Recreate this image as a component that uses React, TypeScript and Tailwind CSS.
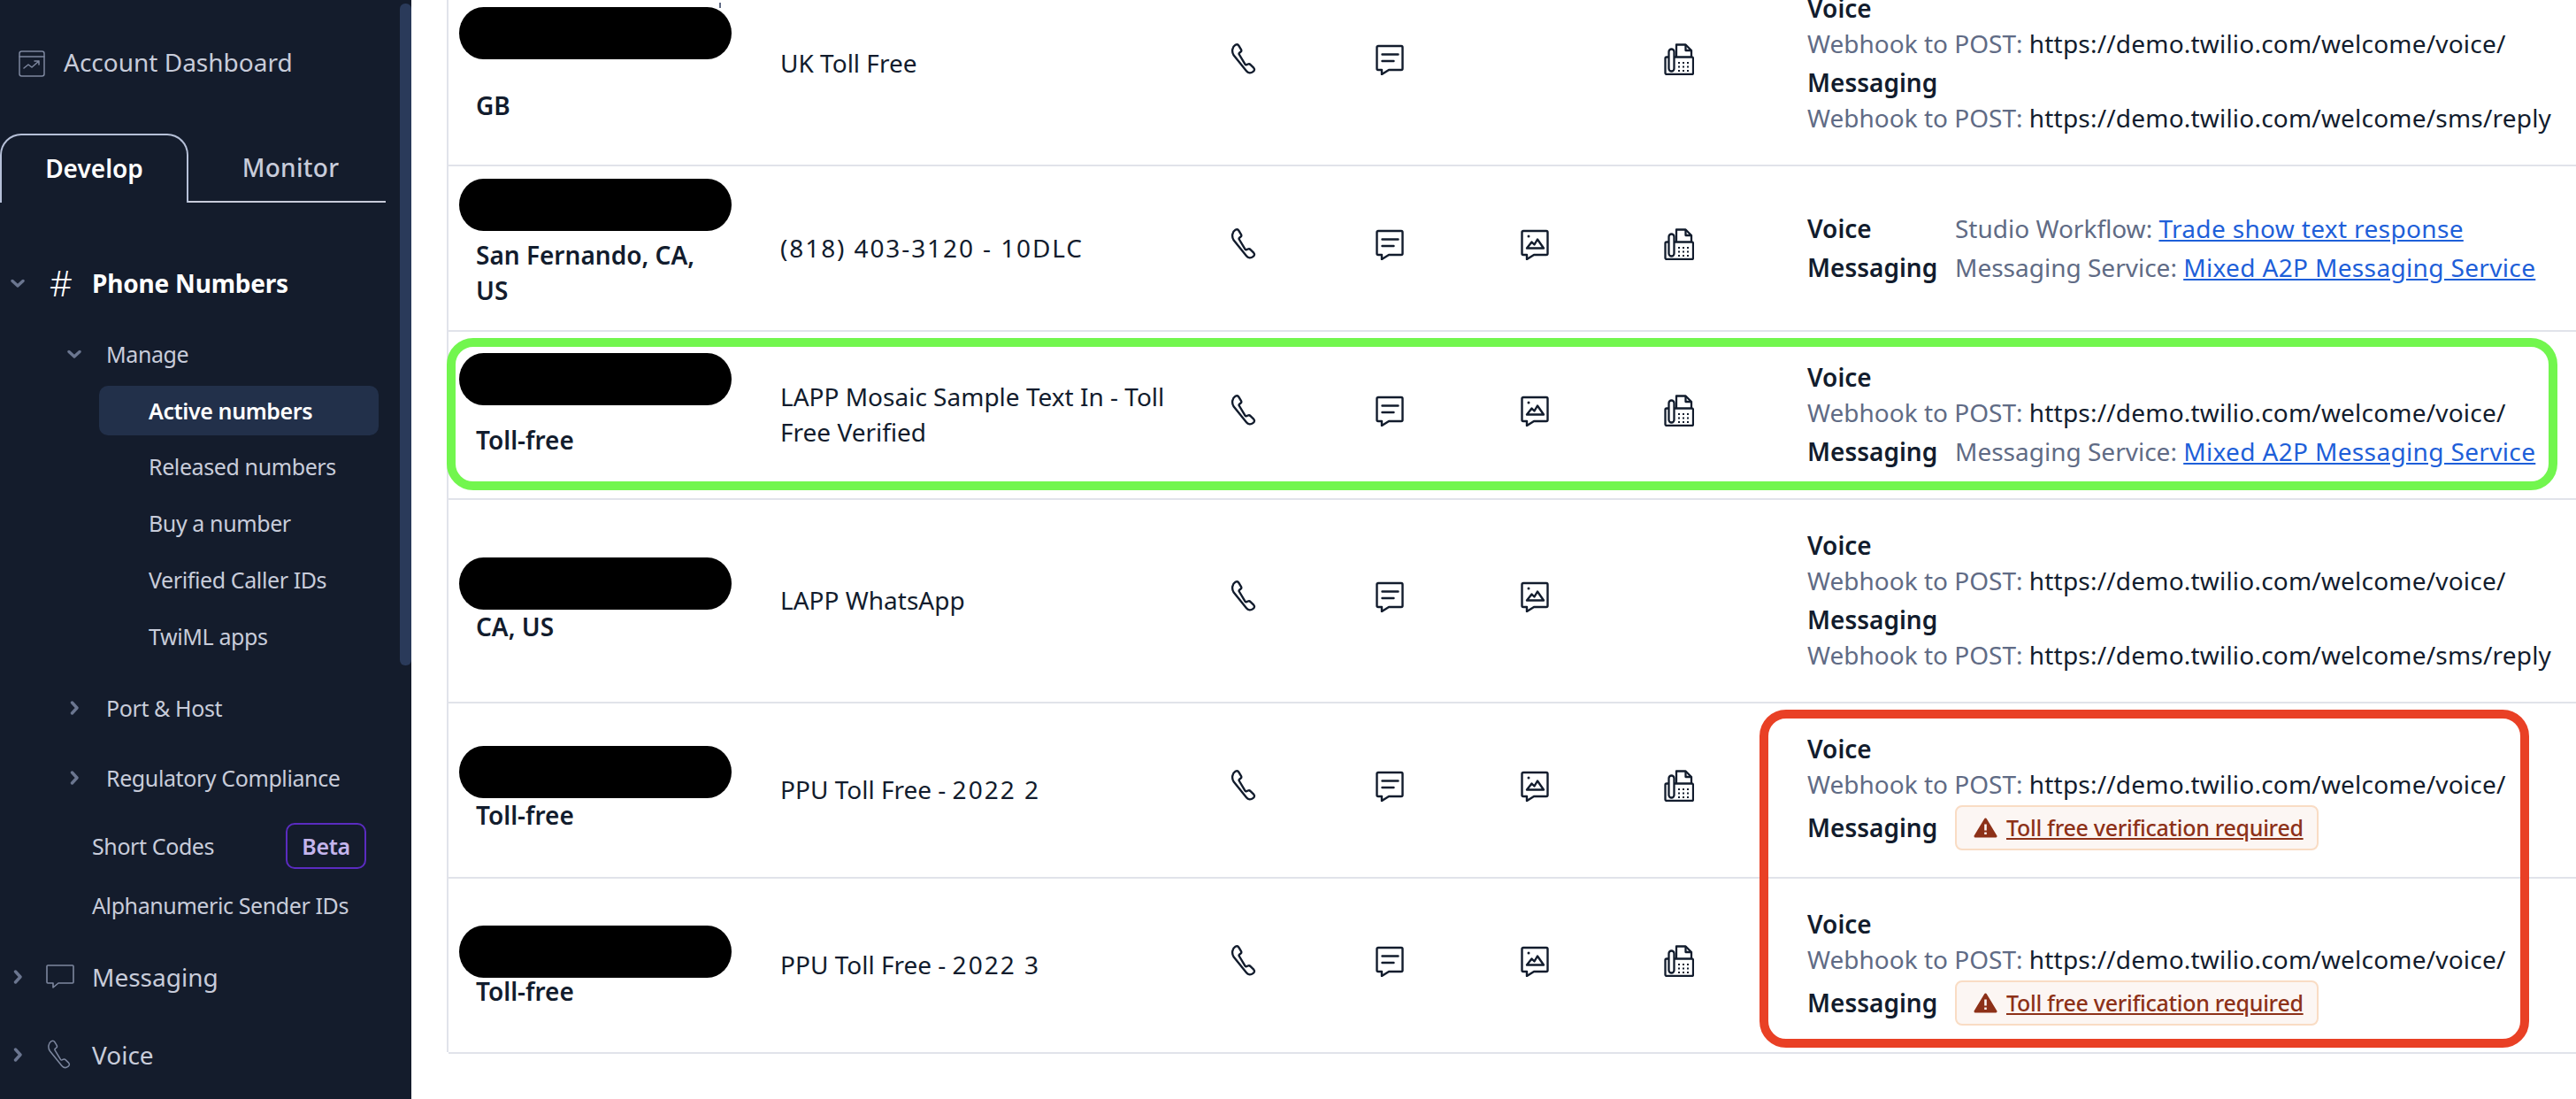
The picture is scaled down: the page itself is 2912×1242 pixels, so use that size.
import React from "react";

const font = "font-['Noto_Sans','Open_Sans',sans-serif]";

function Chevron({ dir, className }: { dir: "down" | "right"; className: string }) {
  return (
    <svg viewBox="0 0 16 16" className={className} fill="none" stroke="#6b7690" strokeWidth="3.4" strokeLinecap="round" strokeLinejoin="round">
      {dir === "down" ? <path d="M2 5.500l6 5.500 6-5.500" /> : <path d="M5.500 2l5.500 6-5.500 6" />}
    </svg>
  );
}

function PhoneIcon({ className, color = "#121c2d", sw = 2.4 }: { className: string; color?: string; sw?: number }) {
  return (
    <svg viewBox="0 0 32 36" className={className} fill="none" stroke={color} strokeWidth={sw} strokeLinejoin="round">
      <path d="M5.500 1.800c1.600-.9 3.200-.4 4 1l2.400 4c.6 1.100.4 2.300-.6 3l-1.200.9c-.6.5-.7 1.100-.3 1.800l6.700 11.200c.4.600 1 .8 1.700.5l1.500-.7c1.100-.5 2.200-.2 2.900.7l3.600 3.500c1.200 1.300 1 3.100-.5 4.200-2.700 2-5.800 1.800-7.700-.7L3.700 13.500C1 9.500 1.800 4 5.500 1.800z" />
    </svg>
  );
}

function SmsIcon() {
  return (
    <svg viewBox="0 0 32 36" className="h-[36px] w-[32px]" fill="none" stroke="#121c2d" strokeWidth="2.4" strokeLinejoin="round">
      <path d="M3 3h26a1.500 1.500 0 0 1 1.500 1.500v24a1.500 1.500 0 0 1-1.500 1.500H15l-8 5v-5H3a1.500 1.500 0 0 1-1.500-1.500v-24A1.500 1.500 0 0 1 3 3z" />
      <path d="M7.500 12.500h18M7.500 20h13" strokeLinecap="round" />
    </svg>
  );
}

function MmsIcon() {
  return (
    <svg viewBox="0 0 32 36" className="h-[36px] w-[32px]" fill="none" stroke="#121c2d" strokeWidth="2.4" strokeLinejoin="round">
      <path d="M3 3h26a1.500 1.500 0 0 1 1.500 1.500v24a1.500 1.500 0 0 1-1.500 1.500H15l-8 5v-5H3a1.500 1.500 0 0 1-1.500-1.500v-24A1.500 1.500 0 0 1 3 3z" />
      <path d="M7 22.500l5.500-7 3 3 3.500-6 7 10z" />
      <circle cx="9" cy="9" r="1.500" fill="#121c2d" stroke="none" />
    </svg>
  );
}

function FaxIcon() {
  return (
    <svg viewBox="0 0 34 36" className="h-[36px] w-[34px]" fill="none" stroke="#121c2d" strokeWidth="2.3" strokeLinejoin="round">
      <path d="M14 15V1.500h10.500L31 8v7" />
      <path d="M24.500 1.500V8H31" />
      <path d="M12 15.500h19.500a1.500 1.500 0 0 1 1.500 1.500v16.500a1.500 1.500 0 0 1-1.500 1.500H3a1.500 1.500 0 0 1-1.500-1.500V17A1.500 1.500 0 0 1 3 15.500h2" />
      <rect x="5.500" y="6.500" width="6" height="25" rx="3" />
      <path d="M16 22h2M21 22h2M26 22h2M16 26.500h2M21 26.500h2M26 26.500h2M16 31h2M21 31h2M26 31h2" strokeWidth="2" />
    </svg>
  );
}

function Pill({ className }: { className: string }) {
  return <div className={`-ml-[19px] h-[59px] w-[308px] rounded-[28px/30px] bg-black ${className}`} />;
}

function Webhook({ url }: { url: string }) {
  return (
    <div className="h-[40px] whitespace-nowrap">
      <span className="text-[#606b85]">Webhook to POST: </span>
      <span className="tracking-[0.2px] text-[#121c2d]">{url}</span>
    </div>
  );
}

function Label({ children }: { children: React.ReactNode }) {
  return <span className="font-semibold text-[#121c2d]">{children}</span>;
}

function ServiceLine({ label, prefix, link }: { label: string; prefix: string; link: string }) {
  return (
    <div className="flex h-[40px] whitespace-nowrap">
      <div className="w-[167px] shrink-0"><Label>{label}</Label></div>
      <span className="text-[#606b85]">{prefix}&nbsp;</span>
      <a className="tracking-[0.35px] text-[#1e5fd9] underline">{link}</a>
    </div>
  );
}

function Warning() {
  return (
    <div className="flex items-center">
      <div className="w-[167px] shrink-0"><Label>Messaging</Label></div>
      <div className="flex h-[51px] w-[411px] items-center rounded-[8px] border-2 border-[#f9dcc4] bg-[#fcf6f3] pl-[19px]">
        <svg viewBox="0 0 27 23" className="mr-[10px] h-[23px] w-[27px]">
          <path d="M13.500 2L25 21H2z" fill="#8d3118" stroke="#8d3118" strokeWidth="3" strokeLinejoin="round" />
          <path d="M13.500 7.500v7M13.500 16.500v2.500" stroke="#fcf6f3" strokeWidth="2.600" />
        </svg>
        <a className="text-[25px] font-medium leading-[40px] tracking-[-0.3px] text-[#8d3118] underline">Toll free verification required</a>
      </div>
    </div>
  );
}

function Row({
  rowClass,
  cellClass,
  pillClass,
  configClass = "-mt-[2px]",
  location,
  name,
  mms = true,
  fax = true,
  children,
}: {
  rowClass: string;
  cellClass: string;
  pillClass: string;
  configClass?: string;
  location: React.ReactNode;
  name: React.ReactNode;
  mms?: boolean;
  fax?: boolean;
  children: React.ReactNode;
}) {
  return (
    <div className={`flex items-center border-b-2 border-[#e1e3ea] ${rowClass}`}>
      <div className={`w-[375px] shrink-0 self-start pl-[31px] ${cellClass}`}>
        <Pill className={pillClass} />
        <div className="-mt-px font-semibold text-[#121c2d]">{location}</div>
      </div>
      <div className="-mt-[2px] w-[509px] shrink-0 pr-[60px] text-[#121c2d]">{name}</div>
      <div className="w-[164px] shrink-0 pb-[10px]"><PhoneIcon className="h-[36px] w-[32px]" /></div>
      <div className="w-[164px] shrink-0 pb-[10px]"><SmsIcon /></div>
      <div className="h-[46px] w-[162px] shrink-0 pb-[10px]">{mms && <MmsIcon />}</div>
      <div className="h-[46px] w-[162px] shrink-0 pb-[10px]">{fax && <FaxIcon />}</div>
      <div className={`flex flex-col gap-[4px] ${configClass}`}>{children}</div>
    </div>
  );
}

const V = "https://demo.twilio.com/welcome/voice/";
const S = "https://demo.twilio.com/welcome/sms/reply";

function Group({ label, children }: { label: string; children: React.ReactNode }) {
  return (
    <div>
      <div className="h-[40px]"><Label>{label}</Label></div>
      {children}
    </div>
  );
}

function SubItem({ children, active }: { children: React.ReactNode; active?: boolean }) {
  return (
    <div
      className={
        active
          ? "mb-[3px] ml-[112px] flex h-[56px] w-[316px] items-center rounded-[10px] bg-[#22304a] pl-[56px] font-semibold text-white"
          : "ml-[112px] flex h-[64px] w-[316px] items-center pl-[56px]"
      }
    >
      {children}
    </div>
  );
}

export default function App() {
  return (
    <div className={`relative flex h-[1242px] w-[2912px] overflow-hidden bg-white text-[28px] leading-[40px] ${font}`}>
      <aside className="relative h-full w-[465px] shrink-0 bg-[#141c2c] text-[25px] tracking-[-0.4px] text-[#c8ccda]">
        <div className="absolute right-0 top-[4px] h-[748px] w-[13px] rounded-[6px] bg-[#2a3a5a]" />
        <div className="flex h-[151px] items-start pl-[21px] pt-[57px] tracking-normal">
          <svg viewBox="0 0 30 30" className="h-[30px] w-[30px]" fill="none" stroke="#7d879f" strokeWidth="1.500" strokeLinecap="round" strokeLinejoin="round">
            <rect x="1" y="1" width="28" height="28" rx="2.500" />
            <path d="M1 7h28" />
            <path d="M6 20l5-4 4 3 8-7M18 12h5v4" />
          </svg>
          <span className="ml-[21px] -mt-[7px] text-[28px]">Account Dashboard</span>
        </div>
        <div className="flex w-[436px] text-[28px] tracking-normal">
          <div className="flex h-[78px] w-[213px] items-center justify-center rounded-t-[24px] border-x-2 border-t-2 border-[#b6c0d8] bg-[#141c2c] pb-[2px] font-semibold text-white">Develop</div>
          <div className="flex h-[78px] flex-1 items-center justify-center border-b-2 border-[#c8ccda] pl-[8px] font-medium tracking-[0.3px]">Monitor</div>
        </div>
        <div className="mt-[71px] flex h-[40px] items-center pl-[12px] font-bold text-white">
          <Chevron dir="down" className="h-[16px] w-[16px]" />
          <span className="ml-[28px] w-[48px] text-[40px] font-light tracking-normal">#</span>
          <span className="text-[28px] tracking-[-0.2px]">Phone Numbers</span>
        </div>
        <div className="mt-[40px] flex h-[40px] items-center pl-[76px]">
          <Chevron dir="down" className="h-[16px] w-[16px]" />
          <span className="ml-[28px]">Manage</span>
        </div>
        <div className="mt-[16px]">
          <SubItem active>Active numbers</SubItem>
          <SubItem>Released numbers</SubItem>
          <SubItem>Buy a number</SubItem>
          <SubItem>Verified Caller IDs</SubItem>
          <SubItem>TwiML apps</SubItem>
        </div>
        <div className="mt-[29px] flex h-[40px] items-center pl-[76px]">
          <Chevron dir="right" className="h-[16px] w-[16px]" />
          <span className="ml-[28px]">Port &amp; Host</span>
        </div>
        <div className="mt-[39px] flex h-[40px] items-center pl-[76px]">
          <Chevron dir="right" className="h-[16px] w-[16px]" />
          <span className="ml-[28px]">Regulatory Compliance</span>
        </div>
        <div className="mt-[31px] flex h-[52px] items-center pl-[104px]">
          <span className="w-[219px]">Short Codes</span>
          <span className="flex h-[52px] w-[91px] items-center justify-center rounded-[10px] border-2 border-[#5a2bc0] font-semibold text-[#c4b5ec]">Beta</span>
        </div>
        <div className="mt-[21px] flex h-[40px] items-center pl-[104px]">Alphanumeric Sender IDs</div>
        <div className="mt-[41px] flex h-[40px] items-center pl-[12px] text-[28px] tracking-normal">
          <Chevron dir="right" className="h-[16px] w-[16px]" />
          <svg viewBox="0 0 32 28" className="ml-[24px] h-[28px] w-[32px]" fill="none" stroke="#7d879f" strokeWidth="1.600" strokeLinejoin="round">
            <path d="M2 1h28a1 1 0 0 1 1 1v18a1 1 0 0 1-1 1H14l-6 5v-5H2a1 1 0 0 1-1-1V2a1 1 0 0 1 1-1z" />
          </svg>
          <span className="ml-[20px]">Messaging</span>
        </div>
        <div className="mt-[48px] flex h-[40px] items-center pl-[12px] text-[28px] tracking-normal">
          <Chevron dir="right" className="h-[16px] w-[16px]" />
          <PhoneIcon className="ml-[24px] h-[34px] w-[32px]" color="#7d879f" sw={1.6} />
          <span className="ml-[20px]">Voice</span>
        </div>
      </aside>

      <main className="relative -mt-[42px] ml-[40px] h-[1231px] flex-1 self-start border-l-2 border-[#e1e3ea]">
        <Row
          rowClass="h-[230px]"
          cellClass="pt-[50px]"
          pillClass="mb-[33px]"
          location="GB"
          name="UK Toll Free"
          mms={false}
        >
          <Group label="Voice"><Webhook url={V} /></Group>
          <Group label="Messaging"><Webhook url={S} /></Group>
        </Row>
        <Row
          rowClass="h-[187px]"
          cellClass="pt-[14px]"
          pillClass="mb-[8px]"
          location={<>San Fernando, CA,<br />US</>}
          name={<span className="tracking-[1.9px]">(818) 403-3120 - 10DLC</span>}
        >
          <ServiceLine label="Voice" prefix="Studio Workflow:" link="Trade show text response" />
          <ServiceLine label="Messaging" prefix="Messaging Service:" link="Mixed A2P Messaging Service" />
        </Row>
        <Row
          rowClass="h-[190px]"
          cellClass="pt-[24px]"
          pillClass="mb-[20px]"
          location="Toll-free"
          name="LAPP Mosaic Sample Text In - Toll Free Verified"
        >
          <Group label="Voice"><Webhook url={V} /></Group>
          <ServiceLine label="Messaging" prefix="Messaging Service:" link="Mixed A2P Messaging Service" />
        </Row>
        <Row
          rowClass="h-[230px]"
          cellClass="pt-[65px]"
          pillClass="-mb-[1px]"
          location="CA, US"
          name="LAPP WhatsApp"
          fax={false}
        >
          <Group label="Voice"><Webhook url={V} /></Group>
          <Group label="Messaging"><Webhook url={S} /></Group>
        </Row>
        <Row
          rowClass="h-[198px]"
          cellClass="pt-[48px]"
          pillClass="mb-[0px]"
          configClass="mt-0"
          location="Toll-free"
          name={<>PPU Toll Free - <span className="tracking-[2px]">2022 2</span></>}
        >
          <Group label="Voice"><Webhook url={V} /></Group>
          <Warning />
        </Row>
        <Row
          rowClass="h-[198px]"
          cellClass="pt-[53px]"
          pillClass="-mb-[5px]"
          configClass="mt-0"
          location="Toll-free"
          name={<>PPU Toll Free - <span className="tracking-[2px]">2022 3</span></>}
        >
          <Group label="Voice"><Webhook url={V} /></Group>
          <Warning />
        </Row>
      </main>

      <div className="absolute left-[813px] top-[3px] h-[6px] w-[2px] bg-[#606b85]" />
      <div className="absolute left-[505px] top-[382px] h-[172px] w-[2386px] rounded-[30px] border-[10px] border-[#72f64e]" />
      <div className="absolute left-[1989px] top-[802px] h-[382px] w-[870px] rounded-[30px] border-[10px] border-[#e94025]" />
    </div>
  );
}
